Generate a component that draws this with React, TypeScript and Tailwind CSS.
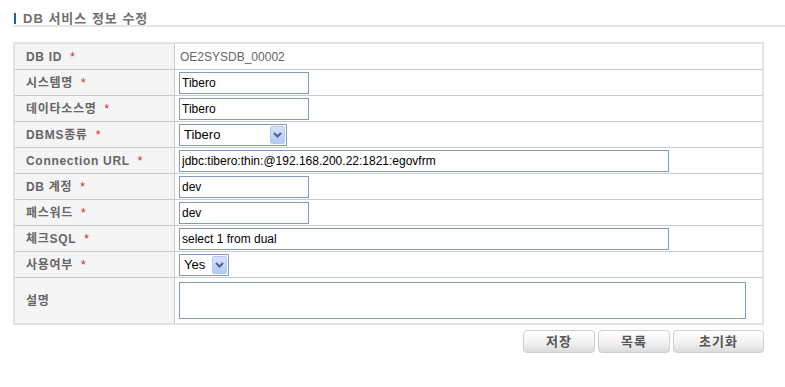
import { ReactNode } from 'react'

const font = { fontFamily: '"Liberation Sans", "Noto Sans CJK KR", sans-serif' }

function Label({ children, required = true }: { children: ReactNode; required?: boolean }) {
  return (
    <div className="w-[160px] shrink-0 bg-[#f5f5f5] border-r border-[#c9c9c9] pl-[11px] flex items-center text-[12px] font-bold text-[#666] tracking-[0.7px]">
      <span>{children}</span>
      {required && <span className="ml-[8px] text-[#e01b1b] font-normal text-[12px]">*</span>}
    </div>
  )
}

function TextInput({ value, width }: { value: string; width: string }) {
  return (
    <input
      defaultValue={value}
      className={`${width} h-[22px] border border-[#7f9db9] bg-white px-[2px] text-[12px] text-black outline-none`}
      style={font}
    />
  )
}

function Select({ value, width }: { value: string; width: string }) {
  return (
    <div className={`${width} relative h-[22px] border border-[#7f9db9] bg-white flex items-center text-[13px] text-black`}>
      <span className="pl-[4px]">{value}</span>
      <span className="absolute right-[1px] top-[1px] bottom-[1px] w-[15px] rounded-[2px] border border-[#b7c8f0] bg-gradient-to-b from-[#d7e3fc] to-[#b4c8f6] flex items-center justify-center">
        <svg width="9" height="6" viewBox="0 0 9 6">
          <path d="M1 1 L4.5 4.5 L8 1" fill="none" stroke="#4d6185" strokeWidth="2" />
        </svg>
      </span>
    </div>
  )
}

function Row({ label, children, last = false, h = 'h-[25px]', required = true }: { label: string; children: ReactNode; last?: boolean; h?: string; required?: boolean }) {
  return (
    <div className={`flex ${h} ${last ? '' : 'border-b border-[#c9c9c9]'} box-content`}>
      <Label required={required}>{label}</Label>
      <div className="flex-1 flex items-center pl-[4px]">{children}</div>
    </div>
  )
}

function Button({ children, width }: { children: ReactNode; width: string }) {
  return (
    <button className={`${width} h-[23px] rounded-[4px] border border-[#cfcfcf] bg-gradient-to-b from-white via-[#f4f4f4] to-[#dcdcdc] text-[13px] font-bold text-[#555] tracking-[1px] flex items-center justify-center`}>
      {children}
    </button>
  )
}

export default function App() {
  return (
    <div className="w-[785px] h-[387px] bg-white pt-[13px]" style={font}>
      <div className="ml-[13px] border-b-2 border-[#e5e5e5] pb-[1px] flex items-center h-[11px] box-content">
        <span className="ml-[1px] w-[2px] h-[11px] bg-[#1a64a0]" />
        <span className="ml-[7px] text-[13px] font-bold text-[#707070] leading-none tracking-[1px]">DB 서비스 정보 수정</span>
      </div>

      <div className="ml-[13px] mt-[15px] w-[751px] border-2 border-[#e3e3e3]">
        <Row label="DB ID">
          <span className="pl-[1px] text-[12px] text-[#666]">OE2SYSDB_00002</span>
        </Row>
        <Row label="시스템명">
          <TextInput value="Tibero" width="w-[130px]" />
        </Row>
        <Row label="데이타소스명">
          <TextInput value="Tibero" width="w-[130px]" />
        </Row>
        <Row label="DBMS종류">
          <Select value="Tibero" width="w-[108px]" />
        </Row>
        <Row label="Connection URL">
          <TextInput value="jdbc:tibero:thin:@192.168.200.22:1821:egovfrm" width="w-[490px]" />
        </Row>
        <Row label="DB 계정">
          <TextInput value="dev" width="w-[130px]" />
        </Row>
        <Row label="패스워드">
          <TextInput value="dev" width="w-[130px]" />
        </Row>
        <Row label="체크SQL">
          <TextInput value="select 1 from dual" width="w-[490px]" />
        </Row>
        <Row label="사용여부">
          <Select value="Yes" width="w-[50px]" />
        </Row>
        <Row label="설명" last h="h-[45px]" required={false}>
          <textarea className="w-[567px] h-[37px] border border-[#7f9db9] resize-none outline-none" />
        </Row>
      </div>

      <div className="w-[764px] mt-[5px] flex justify-end gap-[3px]">
        <Button width="w-[72px]">저장</Button>
        <Button width="w-[72px]">목록</Button>
        <Button width="w-[91px]">초기화</Button>
      </div>
    </div>
  )
}
